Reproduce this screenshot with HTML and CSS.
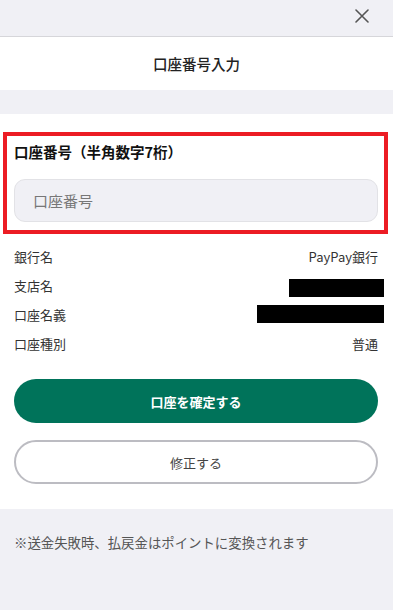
FILE: index.html
```html
<!DOCTYPE html>
<html lang="ja">
<head>
<meta charset="utf-8">
<title>口座番号入力</title>
<link rel="stylesheet" href="styles.css">
</head>
<body>
<div class="topbar">
  <button class="close" aria-label="閉じる">
    <svg width="14" height="14" viewBox="0 0 14 14"><path d="M1 1 L13 13 M13 1 L1 13" stroke="#555" stroke-width="1.6" fill="none" stroke-linecap="round"/></svg>
  </button>
</div>
<header class="header">口座番号入力</header>
<div class="band"></div>
<main class="main">
  <section class="field-box">
    <div class="field-label">口座番号（半角数字7桁）</div>
    <input class="field-input" type="text" placeholder="口座番号">
  </section>
  <dl class="info">
    <div class="row"><dt>銀行名</dt><dd>PayPay銀行</dd></div>
    <div class="row"><dt>支店名</dt><dd><span class="redact redact-short"></span></dd></div>
    <div class="row"><dt>口座名義</dt><dd><span class="redact redact-long"></span></dd></div>
    <div class="row"><dt>口座種別</dt><dd>普通</dd></div>
  </dl>
  <div class="actions">
    <button class="btn btn-primary">口座を確定する</button>
    <button class="btn btn-secondary">修正する</button>
  </div>
</main>
<p class="note">※送金失敗時、払戻金はポイントに変換されます</p>
</body>
</html>
```
FILE: styles.css
```css
* { box-sizing: border-box; }
html, body {
  margin: 0;
  padding: 0;
  background: #f0f0f5;
  font-family: "Noto Sans CJK JP", "Noto Sans", sans-serif;
  color: #333;
}
.topbar {
  height: 37px;
  background: #f0f0f5;
  border-bottom: 1px solid #d6d6da;
  display: flex;
  justify-content: flex-end;
  align-items: flex-start;
}
.close {
  border: 0;
  background: none;
  padding: 0;
  margin: 9px 24px 0 0;
  width: 14px;
  height: 14px;
  display: flex;
}
.header {
  height: 53px;
  background: #fff;
  display: flex;
  align-items: center;
  justify-content: center;
  font-size: 14.5px;
  font-weight: 500;
  color: #222;
}
.band { height: 24px; background: #f0f0f5; }
.main {
  background: #fff;
  padding: 18px 0 25px;
}
.field-box {
  margin: 0 5px 0 3px;
  border: 4px solid #ec1c24;
  padding: 6px 6px 8px 7px;
}
.field-label {
  font-size: 14.5px;
  font-weight: 700;
  line-height: 20px;
  color: #111;
}
.field-input {
  display: block;
  width: 100%;
  height: 43px;
  margin-top: 17px;
  border: 1.5px solid #e2e2e6;
  border-radius: 11px;
  background: #f0f0f5;
  padding: 0 18px;
  font-family: inherit;
  font-size: 15px;
  color: #333;
  outline: none;
}
.field-input::placeholder { color: #777; }
.info {
  margin: 8px 0 0;
  padding: 0 15px 0 14px;
}
.row {
  height: 29px;
  display: flex;
  align-items: center;
  justify-content: space-between;
  font-size: 13px;
}
.row dt, .row dd { margin: 0; color: #333; }
.row dd { display: flex; align-items: center; }
.redact {
  display: inline-block;
  height: 18px;
  background: #000;
  margin-right: -6px;
}
.redact-short { width: 95px; margin-top: 5px; }
.redact-long { width: 127px; margin-top: -1px; }
.actions {
  display: flex;
  flex-direction: column;
  gap: 17px;
  padding: 21px 15px 0 14px;
}
.btn {
  height: 44px;
  border-radius: 22px;
  font-family: inherit;
  font-size: 13px;
  width: 100%;
}
.btn-primary {
  background: #00735a;
  border: 0;
  color: #fff;
  font-weight: 700;
}
.btn-secondary {
  background: #fff;
  border: 2px solid #bcbcc2;
  color: #444;
}
.note {
  margin: 0;
  padding: 23px 14px 0;
  font-size: 13.4px;
  line-height: 20px;
  color: #555;
}
```
